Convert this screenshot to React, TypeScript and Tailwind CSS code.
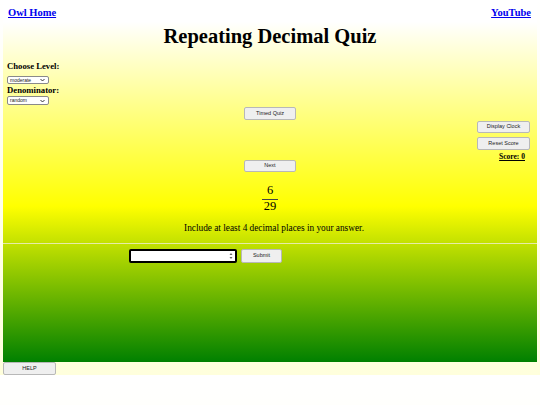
import React from "react";

const serif = "font-['Liberation_Serif','Times_New_Roman',serif]";
const sans = "font-['Liberation_Sans',Arial,sans-serif]";

function Btn({ label, className }: { label: string; className: string }) {
  return (
    <div
      className={`${sans} flex items-center justify-center rounded-[2px] border border-[#b8b8b8] bg-[#efefef] text-[5.5px] leading-none text-[#222] ${className}`}
    >
      {label}
    </div>
  );
}

function FakeSelect({ label, className }: { label: string; className: string }) {
  return (
    <div
      className={`${sans} flex items-center justify-between rounded-[2px] border border-[#8a8a8a] bg-white pl-[2px] pr-[3px] text-[5px] leading-none text-[#222] ${className}`}
    >
      <span>{label}</span>
      <svg width="5" height="4" viewBox="0 0 10 8">
        <path d="M1 2 L5 6 L9 2" fill="none" stroke="#222" strokeWidth="1.8" />
      </svg>
    </div>
  );
}

export default function App() {
  return (
    <div className={`${serif} min-h-[405px] w-[540px] bg-[linear-gradient(#ffffff,#ffffdc)] bg-[length:100%_375px] bg-repeat-y`}>
      <div className="mx-[3px] flex h-[362px] flex-col bg-[linear-gradient(#ffffff_0%,#ffffff_6%,#ffff00_57%,#008000_100%)]">
        <div className="flex h-[12px] items-center justify-between pl-[5px] pr-[6px] mt-[7px] text-[10.5px] font-bold leading-[12px]">
          <span className="text-[#0000ee] underline">Owl Home</span>
          <span className="text-[#0000ee] underline">YouTube</span>
        </div>
        <h1 className="mt-[5px] text-center text-[20.5px] font-bold leading-[24px] text-black">
          Repeating Decimal Quiz
        </h1>
        <div className="mt-[13px] pl-[4px]">
          <div className="h-[10px] text-[8.7px] font-bold leading-[10px] text-black">Choose Level:</div>
          <FakeSelect label="moderate" className="mt-[5px] h-[8px] w-[42px]" />
          <div className="h-[10px] mt-[1px] text-[8.7px] font-bold leading-[10px] text-black">Denominator:</div>
          <FakeSelect label="random" className="mt-[1px] h-[9px] w-[42px]" />
        </div>
        <Btn label="Timed Quiz" className="mx-auto mt-[2px] h-[13px] w-[52px]" />
        <div className="flex flex-col items-end pr-[7px]">
          <Btn label="Display Clock" className="mt-[1px] h-[12px] w-[53px]" />
          <Btn label="Reset Score" className="mt-[4px] h-[13px] w-[53px]" />
          <div className="mt-[3px] mr-[5px] h-[8px] text-[7.5px] font-bold leading-[8px] text-black underline">
            Score: 0
          </div>
        </div>
        <Btn label="Next" className="mx-auto mt-[-1px] h-[12px] w-[52px]" />
        <div className="mt-[12px] flex flex-col items-center text-[12.5px] leading-[13px] text-black">
          <div className="h-[13px]">6</div>
          <div className="mt-[2px] h-px w-[16px] bg-[#444]" />
          <div className="h-[13px]">29</div>
        </div>
        <div className="mt-[10px] pl-[8px] text-center text-[9.3px] leading-[11px] text-black">
          Include at least 4 decimal places in your answer.
        </div>
        <div className="mt-[9px] h-px w-full bg-[#e6eba8]" />
        <div className="mt-[5px] flex items-center gap-[4px] pl-[126px]">
          <div className="flex h-[14px] w-[108px] items-center justify-end rounded-[2px] border-2 border-black bg-white pr-[2px]">
            <svg width="4" height="8" viewBox="0 0 8 16">
              <path d="M1 6 L4 2 L7 6 Z" fill="#666" />
              <path d="M1 10 L4 14 L7 10 Z" fill="#666" />
            </svg>
          </div>
          <Btn label="Submit" className="h-[14px] w-[41px]" />
        </div>
      </div>
      <Btn label="HELP" className="h-[13px] w-[53px] ml-[3px]" />
    </div>
  );
}
